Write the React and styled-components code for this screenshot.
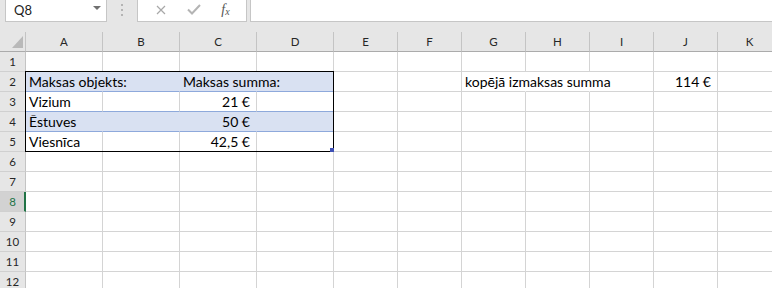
import styled, { createGlobalStyle } from "styled-components";

const GlobalStyle = createGlobalStyle`
    body {
        margin: 0;
        background: #ffffff;
        overflow: hidden;
        font-family: Lato, "Liberation Sans", sans-serif;
    }
`

const COLS = ["A", "B", "C", "D", "E", "F", "G", "H", "I", "J", "K"]
const ROWS = [1, 2, 3, 4, 5, 6, 7, 8, 9, 10, 11, 12]

const GRID = "#d4d4d4"
const BAND = "#d9e1f2"
const BAND_LINE = "#8ea9db"

const cells = {
    A2: { text: "Maksas objekts:" },
    C2: { text: "Maksas summa:" },
    A3: { text: "Vizium" },
    C3: { text: "21 €", right: true },
    A4: { text: "Ēstuves" },
    C4: { text: "50 €", right: true },
    A5: { text: "Viesnīca" },
    C5: { text: "42,5 €", right: true },
    G2: { text: "kopējā izmaksas summa" },
    J2: { text: "114 €", right: true },
}

// G2 text runs over H2 and into I2, so those gridlines are hidden
const spill = ["G2", "H2"]

const App = () => {
    return (
        <Window>
            <GlobalStyle />
            <Toolbar>
                <NameBox>
                    <span>Q8</span>
                    <Caret />
                </NameBox>
                <Grip>
                    <Dot />
                    <Dot />
                    <Dot />
                </Grip>
                <FxButtons>
                    <svg width="10" height="10" viewBox="0 0 10 10">
                        <path d="M1 1 L9 9 M9 1 L1 9" stroke="#a8a8a8" strokeWidth="1.2" fill="none" />
                    </svg>
                    <svg width="14" height="11" viewBox="0 0 14 11">
                        <path d="M1 5.5 L5 9.5 L13 1" stroke="#b4b4b4" strokeWidth="2" fill="none" />
                    </svg>
                    <Fx>f<sub>x</sub></Fx>
                </FxButtons>
                <FormulaInput />
            </Toolbar>
            <Sheet>
                <Corner>
                    <svg width="11" height="12" viewBox="0 0 11 12">
                        <polygon points="11,0 11,12 0,12" fill="#b9b9b9" />
                    </svg>
                </Corner>
                {COLS.map((c, i) => (
                    <ColHead key={c} $c={i + 2}>{c}</ColHead>
                ))}
                {ROWS.map((r) => (
                    <Row key={r} r={r} />
                ))}
                <TableFrame>
                    <Handle />
                </TableFrame>
            </Sheet>
        </Window>
    );
}

const Row = ({ r }) => {
    return (
        <>
            <RowHead $r={r + 1} $selected={r === 8}>{r}</RowHead>
            {COLS.map((c, i) => {
                const id = c + r
                const inTable = i < 4 && r >= 2 && r <= 5
                const banded = inTable && (r === 2 || r === 4)
                const cell = cells[id]
                let rightLine = GRID
                if (banded) rightLine = BAND
                if (spill.includes(id)) rightLine = "transparent"
                return (
                    <Cell
                        key={id}
                        $r={r + 1}
                        $c={i + 2}
                        $fill={banded ? BAND : "#ffffff"}
                        $bottom={inTable && r < 5 ? BAND_LINE : GRID}
                        $rightLine={rightLine}
                        $right={cell && cell.right}
                        $filled={!!cell}
                    >
                        {cell ? cell.text : ""}
                    </Cell>
                )
            })}
        </>
    )
}

export default App;

const Window = styled.div`
    width: 100vw;
    height: 100vh;
    overflow: hidden;
`

const Toolbar = styled.div`
    display: flex;
    align-items: flex-start;
    height: 32px;
    padding-left: 5px;
    background: #e6e6e6;
    box-sizing: border-box;
`

const NameBox = styled.div`
    width: 102px;
    height: 22px;
    box-sizing: border-box;
    display: flex;
    align-items: center;
    justify-content: space-between;
    padding: 0 5px 1px 8px;
    background: #ffffff;
    border: 1px solid #c6c6c6;
    border-top: none;
    font-size: 13px;
    color: #222;
`

const Caret = styled.span`
    width: 0;
    height: 0;
    margin-bottom: 5px;
    border-left: 4px solid transparent;
    border-right: 4px solid transparent;
    border-top: 4px solid #707070;
`

const Grip = styled.div`
    width: 30px;
    height: 20px;
    display: flex;
    flex-direction: column;
    align-items: center;
    justify-content: center;
    gap: 3px;
`

const Dot = styled.span`
    width: 2px;
    height: 2px;
    background: #b4b4b4;
`

const FxButtons = styled.div`
    width: 110px;
    height: 22px;
    box-sizing: border-box;
    display: flex;
    align-items: center;
    justify-content: space-around;
    padding: 0 6px 2px 8px;
    background: #ffffff;
    border: 1px solid #c6c6c6;
    border-top: none;
`

const Fx = styled.span`
    font-family: "Liberation Serif", serif;
    font-style: italic;
    font-size: 14px;
    color: #555;

    sub {
        font-size: 10px;
        vertical-align: -1px;
    }
`

const FormulaInput = styled.div`
    flex: 1;
    height: 22px;
    margin-left: 3px;
    box-sizing: border-box;
    background: #ffffff;
    border: 1px solid #c6c6c6;
    border-top: none;
    border-right: none;
`

const Sheet = styled.div`
    display: grid;
    grid-template-columns: 26px repeat(4, 77px) repeat(7, 64px);
    grid-auto-rows: 20px;
    width: 782px;
`

const Corner = styled.div`
    grid-row: 1;
    grid-column: 1;
    display: flex;
    align-items: flex-end;
    justify-content: flex-end;
    padding: 0 2px 3px 0;
    background: #e6e6e6;
    border-right: 1px solid #c4c4c4;
    border-bottom: 1px solid #ababab;
    box-sizing: border-box;
`

const ColHead = styled.div`
    grid-row: 1;
    grid-column: ${(p) => p.$c};
    background: #e6e6e6;
    border-right: 1px solid #c4c4c4;
    border-bottom: 1px solid #ababab;
    box-sizing: border-box;
    text-align: center;
    font-size: 11.5px;
    line-height: 19px;
    color: #262626;
`

const RowHead = styled.div`
    grid-row: ${(p) => p.$r};
    grid-column: 1;
    background: ${(p) => (p.$selected ? "#d2d2d2" : "#e6e6e6")};
    border-right: ${(p) => (p.$selected ? "2px solid #217346" : "1px solid #c4c4c4")};
    border-bottom: 1px solid #d0d0d0;
    box-sizing: border-box;
    text-align: center;
    padding-left: ${(p) => (p.$selected ? "1px" : "0")};
    font-size: 11.5px;
    line-height: 19px;
    color: ${(p) => (p.$selected ? "#217346" : "#262626")};
`

const Cell = styled.div`
    grid-row: ${(p) => p.$r};
    grid-column: ${(p) => p.$c};
    position: ${(p) => (p.$filled ? "relative" : "static")};
    z-index: ${(p) => (p.$filled ? 1 : "auto")};
    background: ${(p) => p.$fill};
    border-right: 1px solid ${(p) => p.$rightLine};
    border-bottom: 1px solid ${(p) => p.$bottom};
    box-sizing: border-box;
    padding: ${(p) => (p.$right ? "0 6px 0 3px" : "0 3px")};
    text-align: ${(p) => (p.$right ? "right" : "left")};
    white-space: nowrap;
    font-size: 14px;
    line-height: 19px;
    color: #000;
`

const TableFrame = styled.div`
    grid-column: 2 / 6;
    grid-row: 3 / 7;
    margin: -1px 0 0 -1px;
    position: relative;
    z-index: 2;
    border: 1px solid #000;
    pointer-events: none;
`

const Handle = styled.span`
    position: absolute;
    right: -1px;
    bottom: -1px;
    width: 4px;
    height: 4px;
    background: #3f51b5;
`
